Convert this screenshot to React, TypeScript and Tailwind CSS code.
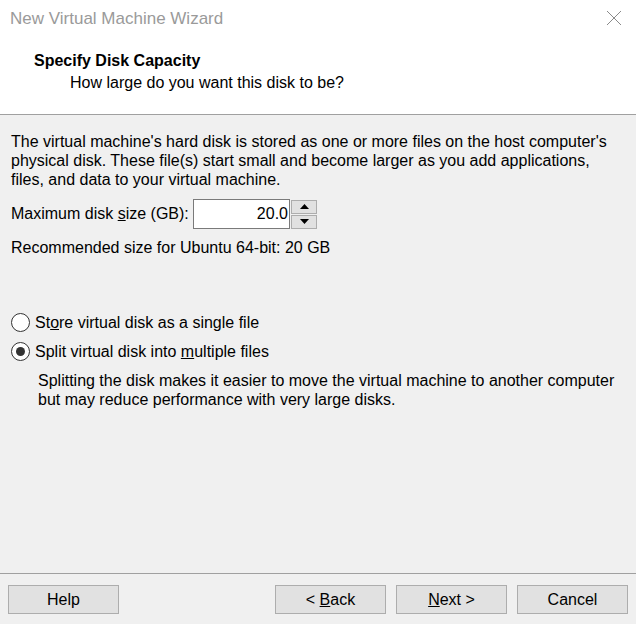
import React from "react";

const font = { fontFamily: '"Liberation Sans", Arial, sans-serif' };

function Btn({ children }: { children: React.ReactNode }) {
  return (
    <button className="w-[111px] h-[29px] border border-[#adadad] bg-[#e1e1e1] text-[16px] text-black flex items-center justify-center leading-none whitespace-pre">
      {children}
    </button>
  );
}

function Radio({ checked }: { checked?: boolean }) {
  return (
    <span className="w-[19px] h-[19px] rounded-full border border-[#333333] bg-white flex items-center justify-center shrink-0">
      {checked && <span className="w-[9px] h-[9px] rounded-full bg-[#333333]" />}
    </span>
  );
}

export default function App() {
  return (
    <div className="w-[636px] h-[624px] bg-[#f0f0f0] flex flex-col text-black text-[16px]" style={font}>
      <div className="bg-white h-[115px] flex flex-col border-b border-[#a0a0a0]">
        <div className="h-[38px] flex items-center justify-between pl-[10px] pr-[14px]">
          <span className="text-[17px] text-[#9a9a9a]">New Virtual Machine Wizard</span>
          <svg width="16" height="16" viewBox="0 0 16 16" className="mt-[-2px]">
            <path d="M1 1 L15 15 M15 1 L1 15" stroke="#8a8a8a" strokeWidth="1" />
          </svg>
        </div>
        <div className="pl-[34px] mt-[13px] font-bold text-[16px] leading-[19px]">Specify Disk Capacity</div>
        <div className="pl-[70px] mt-[3px] leading-[19px]">How large do you want this disk to be?</div>
      </div>
      <div className="flex-1 flex flex-col px-[11px]">
        <p className="mt-[17px] leading-[19px] w-[610px]">
          The virtual machine's hard disk is stored as one or more files on the host computer's physical disk. These file(s) start small and become larger as you add applications, files, and data to your virtual machine.
        </p>
        <div className="flex items-center mt-[10px] h-[30px]">
          <span className="w-[182px]">
            Maximum disk <u>s</u>ize (GB):
          </span>
          <div className="w-[97px] h-[30px] border border-[#7a7a7a] bg-white flex items-center justify-end pr-[1px]">20.0</div>
          <div className="flex flex-col ml-[1px] h-[30px] justify-center gap-[1px]">
            <div className="w-[26px] h-[14px] border border-[#adadad] bg-[#e1e1e1] flex items-center justify-center">
              <svg width="9" height="5" viewBox="0 0 9 5"><path d="M4.5 0 L9 5 L0 5 Z" fill="#000" /></svg>
            </div>
            <div className="w-[26px] h-[14px] border border-[#adadad] bg-[#e1e1e1] flex items-center justify-center">
              <svg width="9" height="5" viewBox="0 0 9 5"><path d="M0 0 L9 0 L4.5 5 Z" fill="#000" /></svg>
            </div>
          </div>
        </div>
        <div className="mt-[9px] leading-[19px]">Recommended size for Ubuntu 64-bit: 20 GB</div>
        <div className="mt-[56px] flex items-center gap-[5px] h-[19px]">
          <Radio />
          <span>
            St<u>o</u>re virtual disk as a single file
          </span>
        </div>
        <div className="mt-[10px] flex items-center gap-[5px] h-[19px]">
          <Radio checked />
          <span>
            Split virtual disk into <u>m</u>ultiple files
          </span>
        </div>
        <p className="mt-[10px] pl-[27px] leading-[19px]">
          Splitting the disk makes it easier to move the virtual machine to another computer
          <br />
          but may reduce performance with very large disks.
        </p>
      </div>
      <div className="border-t border-[#a0a0a0] h-[51px] flex items-start pt-[11px] px-[8px]">
        <Btn>Help</Btn>
        <div className="flex-1" />
        <div className="flex gap-[10px]">
          <Btn>
            {"< "}
            <u>B</u>ack
          </Btn>
          <Btn>
            <u>N</u>ext{" >"}
          </Btn>
          <Btn>Cancel</Btn>
        </div>
      </div>
    </div>
  );
}
